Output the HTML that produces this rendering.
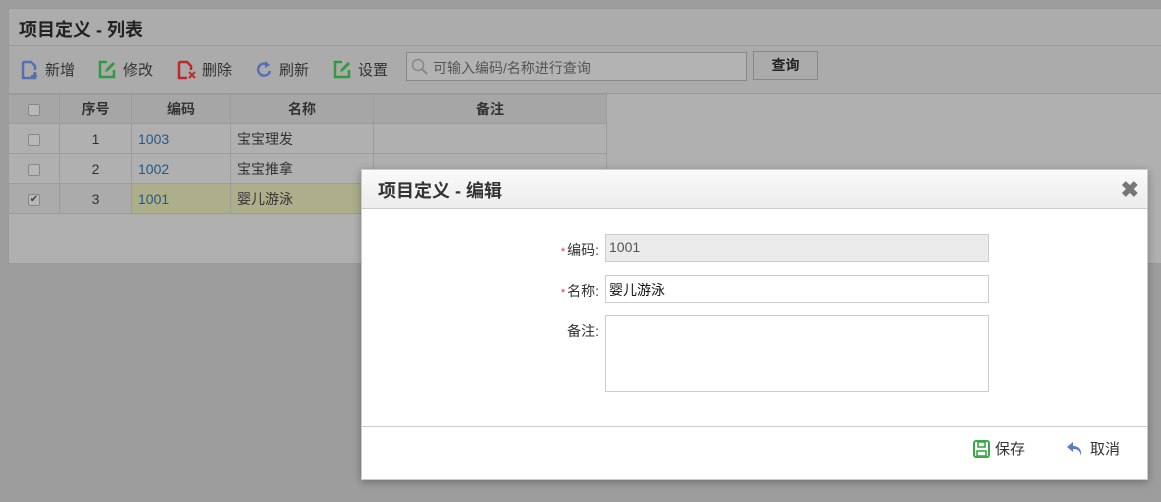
<!DOCTYPE html>
<html><head><meta charset="utf-8"><style>
*{box-sizing:border-box;margin:0;padding:0}
body{width:1161px;height:502px;overflow:hidden;background:#9d9d9d;font-family:"Liberation Sans","Noto Sans CJK SC",sans-serif;font-size:14px;color:#333;position:relative}
.panel{position:absolute;left:8px;top:8px;width:1160px;height:256px;background:#b0b0b0;border:1px solid #9a9a9a}
.title{height:37px;border-bottom:1px solid #999;font-size:18px;font-weight:bold;padding:7px 0 0 10px;color:#222;background:#acacac}
.tb{height:48px;border-bottom:1px solid #999;position:relative;background:#ababab}
.btn{position:absolute;top:13px;font-size:15px;color:#333;display:flex;align-items:center}
.btn svg{margin-right:6px}
.search{position:absolute;left:397px;top:6px;width:341px;height:29px;border:1px solid #888;background:#b3b3b3;font-size:14px;color:#555;padding:5px 0 0 26px}
.qbtn{position:absolute;left:744px;top:5px;width:65px;height:29px;border:1px solid #888;background:#ababab;font-weight:bold;text-align:center;line-height:27px;color:#222}
table{position:absolute;left:-1px;top:85px;border-collapse:collapse}
td{height:30px;border:1px solid #9c9c9c;font-size:14px;padding:0 6px}
tr.h td{background:#a6a6a6;font-weight:bold;text-align:center;height:29px}
.cb{display:inline-block;width:12px;height:12px;border:1px solid #888;border-radius:2px;background:#b8b8b8;vertical-align:middle;font-size:10px;line-height:10px;text-align:center;color:#444}
.n{color:#1f5a8c}
.sel td{background:#adae8a}
.sel td.f{background:#ababab}
.dlg{position:absolute;left:361px;top:169px;width:787px;height:311px;background:#fff;border:1px solid #ccc;box-shadow:0 2px 8px rgba(0,0,0,.3)}
.dh{height:39px;border-bottom:1px solid #ccc;background:linear-gradient(#fafafa,#ececec);font-size:18px;font-weight:bold;color:#333;padding:7px 0 0 16px}
.x{position:absolute;right:8px;top:7px;font-size:22px;color:#777;font-weight:bold}
.lbl{position:absolute;right:548px;font-size:14px;color:#333}
.lbl i{color:#e33;font-style:normal;font-size:11px;margin-right:2px}
.in{position:absolute;left:243px;width:384px;border:1px solid #ccc;background:#fff;padding:4px 3px;font-size:14px;color:#111}
.foot{position:absolute;left:0;right:0;top:256px;border-top:1px solid #ccc}
.fb{position:absolute;top:268px;font-size:15px;display:flex;align-items:center}
.fb svg{margin-right:5px}
</style></head><body>
<div class="panel">
<div class="title">项目定义 - 列表</div>
<div class="tb">
<div class="btn" style="left:12px"><svg width="18" height="20" viewBox="0 0 18 20"><path d="M2 2h8l4 4v4M14 12v6H2V2" fill="none" stroke="#5470b4" stroke-width="2.5"/><path d="M13 13v6M10 16h6" stroke="#5470b4" stroke-width="2"/></svg>新增</div>
<div class="btn" style="left:89px"><svg width="19" height="19" viewBox="0 0 19 19"><path d="M9 2H2v15h14v-7" fill="none" stroke="#2f9a3f" stroke-width="2.5"/><path d="M7 12l1-3 7-7 2 2-7 7z" fill="#2f9a3f"/></svg>修改</div>
<div class="btn" style="left:168px"><svg width="19" height="20" viewBox="0 0 19 20"><path d="M2 2h8l4 4v4M10 18H2V2" fill="none" stroke="#c0292b" stroke-width="2.5"/><path d="M12 12l6 6M18 12l-6 6" stroke="#c0292b" stroke-width="2"/></svg>删除</div>
<div class="btn" style="left:246px"><svg width="18" height="19" viewBox="0 0 18 19"><path d="M13 5A6 6 0 1 0 15 11" fill="none" stroke="#5470b4" stroke-width="2.5"/><path d="M10 1l5 4-5 3z" fill="#5470b4"/></svg>刷新</div>
<div class="btn" style="left:324px"><svg width="19" height="19" viewBox="0 0 19 19"><path d="M9 2H2v15h14v-7" fill="none" stroke="#2f9a3f" stroke-width="2.5"/><path d="M7 12l1-3 7-7 2 2-7 7z" fill="#2f9a3f"/></svg>设置</div>
<div class="search"><svg style="position:absolute;left:4px;top:5px" width="18" height="18" viewBox="0 0 18 18"><circle cx="7" cy="7" r="5.5" fill="none" stroke="#888" stroke-width="1.5"/><path d="M11 11l5 5" stroke="#888" stroke-width="2"/></svg>可输入编码/名称进行查询</div>
<div class="qbtn">查询</div>
</div>
<table>
<tr class="h"><td style="width:51px"><span class="cb"></span></td><td style="width:72px">序号</td><td style="width:99px">编码</td><td style="width:143px">名称</td><td style="width:233px">备注</td></tr>
<tr><td style="text-align:center"><span class="cb"></span></td><td style="text-align:center">1</td><td class="n">1003</td><td>宝宝理发</td><td></td></tr>
<tr><td style="text-align:center"><span class="cb"></span></td><td style="text-align:center">2</td><td class="n">1002</td><td>宝宝推拿</td><td></td></tr>
<tr class="sel"><td class="f" style="text-align:center"><span class="cb">✔</span></td><td class="f" style="text-align:center">3</td><td class="n">1001</td><td>婴儿游泳</td><td></td></tr>
</table>
</div>
<div class="dlg">
<div class="dh">项目定义 - 编辑</div>
<div class="x">✖</div>
<div class="lbl" style="top:70px"><i>*</i>编码:</div>
<div class="in" style="top:64px;height:28px;background:#ebebeb;color:#555">1001</div>
<div class="lbl" style="top:111px"><i>*</i>名称:</div>
<div class="in" style="top:105px;height:28px">婴儿游泳</div>
<div class="lbl" style="top:151px">备注:</div>
<div class="in" style="top:145px;height:77px"></div>
<div class="foot"></div>
<div class="fb" style="left:611px"><svg width="17" height="18" viewBox="0 0 17 18"><rect x="1" y="1" width="15" height="16" rx="2" fill="none" stroke="#3aa748" stroke-width="2"/><rect x="5" y="2" width="7" height="5" fill="none" stroke="#3aa748" stroke-width="1.6"/><rect x="4" y="11" width="9" height="5" fill="none" stroke="#3aa748" stroke-width="1.6"/></svg>保存</div>
<div class="fb" style="left:703px"><svg width="20" height="17" viewBox="0 0 20 17"><path d="M8 2L2 7l6 5V9c5 0 7 2 8 7 1-6-2-10-8-10z" fill="#5b7bc4"/></svg>取消</div>
</div>
</body></html>
